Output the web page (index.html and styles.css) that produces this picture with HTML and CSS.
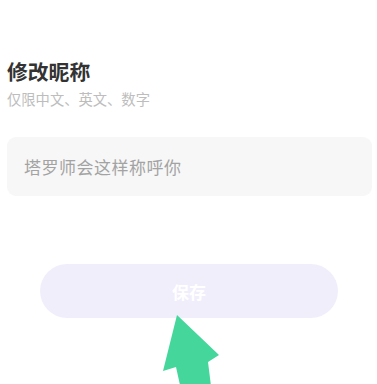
FILE: index.html
```html
<!DOCTYPE html>
<html lang="zh">
<head>
<meta charset="utf-8">
<link rel="stylesheet" href="styles.css">
</head>
<body>
<div class="page">
  <h1 class="title">修改昵称</h1>
  <p class="hint">仅限中文、英文、数字</p>
  <div class="field"><span class="placeholder">塔罗师会这样称呼你</span></div>
  <div class="actions">
    <button class="save">保存</button>
  </div>
  <svg class="arrow" width="377" height="80" viewBox="0 0 377 80">
    <path d="M177 1 L219 41 L208 48 L212 80 L182 80 L176 53 L163 57 Z" fill="#45d69b"/>
  </svg>
</div>
</body>
</html>
```
FILE: styles.css
```css
html, body { margin: 0; padding: 0; background: #fff; }
body { font-family: "Noto Sans CJK SC", "Noto Sans", sans-serif; overflow: hidden; }
.page { position: relative; width: 377px; height: 384px; padding: 0 5px 0 7px; box-sizing: border-box; }
.title { margin: 0; padding-top: 57px; font-size: 20.8px; line-height: 28px; font-weight: 700; color: #333; }
.hint { margin: 5px 0 0; font-size: 14.3px; line-height: 18px; color: #bdbdbd; }
.field { margin-top: 29px; height: 59px; background: #f7f7f7; border-radius: 9px; display: flex; align-items: center; padding-left: 17px; }
.placeholder { font-size: 17px; color: #a3a3a3; letter-spacing: 0.5px; }
.actions { margin-top: 68px; padding-left: 33px; }
.save { width: 298px; height: 54px; border: 0; border-radius: 27px; background: #f1eefb; color: #fff; font-family: inherit; font-size: 17px; font-weight: 700; display: block; }
.arrow { position: absolute; left: 0; top: 314px; }
```
